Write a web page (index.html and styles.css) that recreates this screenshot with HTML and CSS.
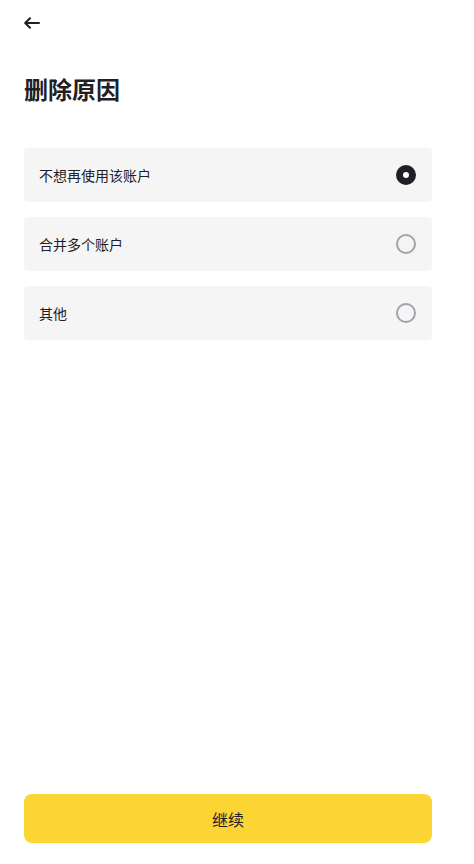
FILE: index.html
```html
<!DOCTYPE html>
<html lang="zh-CN">
<head>
<meta charset="utf-8">
<link rel="stylesheet" href="styles.css">
</head>
<body>
<div class="page">
  <header class="top">
    <svg class="back" width="16" height="12" viewBox="0 0 16 12" fill="none" stroke="#1e2026" stroke-width="2" stroke-linecap="round" stroke-linejoin="round">
      <path d="M15 6H1.5M6 1.2L1.2 6 6 10.8"/>
    </svg>
  </header>
  <h1 class="title">删除原因</h1>
  <div class="options">
    <div class="option"><span>不想再使用该账户</span><span class="radio checked"></span></div>
    <div class="option"><span>合并多个账户</span><span class="radio"></span></div>
    <div class="option"><span>其他</span><span class="radio"></span></div>
  </div>
  <div class="spacer"></div>
  <button class="continue">继续</button>
</div>
</body>
</html>
```

FILE: styles.css
```css
html, body {
  margin: 0;
  padding: 0;
  background: #fff;
}
body {
  font-family: "Noto Sans CJK SC", "Noto Sans", sans-serif;
  color: #1e2026;
}
.page {
  height: 864px;
  box-sizing: border-box;
  padding: 0 42px 21px 24px;
  display: flex;
  flex-direction: column;
}
.top {
  height: 46px;
  display: flex;
  align-items: center;
}
.back {
  display: block;
}
.title {
  margin: 27px 0 43px;
  font-size: 24px;
  line-height: 32px;
  font-weight: 700;
}
.options {
  display: flex;
  flex-direction: column;
  gap: 15px;
}
.option {
  height: 54px;
  background: #f5f5f5;
  border-radius: 4px;
  display: flex;
  align-items: center;
  justify-content: space-between;
  padding: 0 16px 0 15px;
  font-size: 14px;
}
.radio {
  width: 20px;
  height: 20px;
  box-sizing: border-box;
  border-radius: 50%;
  border: 2px solid #a0a4aa;
}
.radio.checked {
  border: 7px solid #1e2026;
  background: #fff;
}
.spacer {
  flex: 1;
}
.continue {
  height: 49px;
  border: none;
  border-radius: 8px;
  background: #fcd535;
  color: #1e2026;
  font-family: inherit;
  font-size: 16px;
  width: 100%;
}
```
